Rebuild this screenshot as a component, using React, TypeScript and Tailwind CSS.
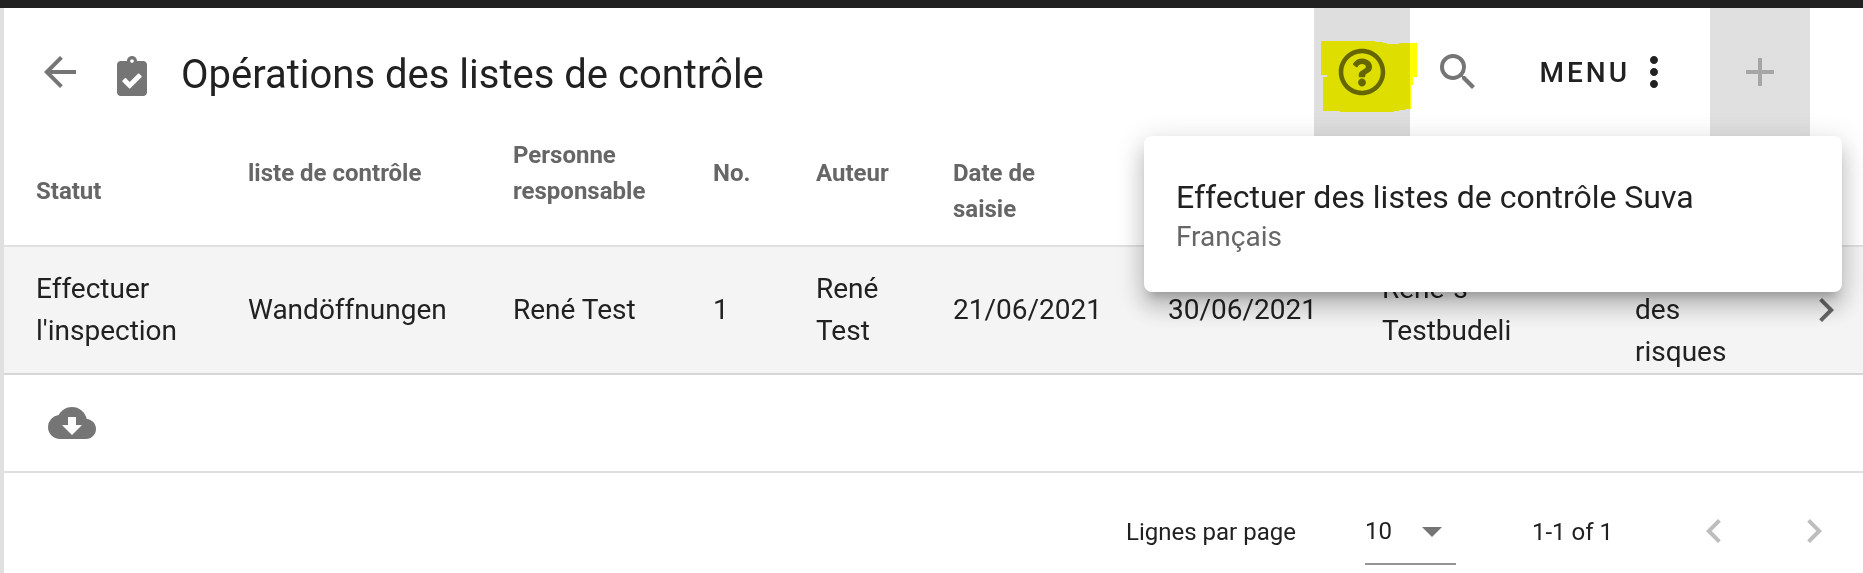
import { useState } from "react";
import { FaClipboardCheck, FaRegQuestionCircle } from "react-icons/fa";
import {
  MdAdd,
  MdArrowBack,
  MdArrowDropDown,
  MdChevronLeft,
  MdChevronRight,
  MdCloudDownload,
  MdMoreVert,
  MdSearch,
} from "react-icons/md";

interface Column {
  label: string;
  width: string;
  sortable?: boolean;
}

const columns: Column[] = [
  { label: "Statut", width: "w-[212px]" },
  { label: "liste de contrôle", width: "w-[265px]", sortable: true },
  { label: "Personne responsable", width: "w-[200px]", sortable: true },
  { label: "No.", width: "w-[103px]", sortable: true },
  { label: "Auteur", width: "w-[137px]", sortable: true },
  { label: "Date de saisie", width: "w-[215px]" },
  { label: "", width: "w-[214px]" },
  { label: "", width: "w-[253px]" },
  { label: "", width: "w-[160px]" },
];

const rows = [
  [
    "Effectuer l'inspection",
    "Wandöffnungen",
    "René Test",
    "1",
    "René Test",
    "21/06/2021",
    "30/06/2021",
    "René´s Testbudeli",
    "Analyse des risques",
  ],
];

function Marker() {
  return (
    <svg
      className="pointer-events-none absolute top-[33px] left-[7px] z-10 h-[71px] w-24 mix-blend-multiply"
      viewBox="0 0 96 71"
      aria-hidden="true"
    >
      <path
        fill="#ffff00"
        d="M0 0H54V1H62V2H66V3H78V2H96V36H92V44H90V68H84V69H78V70H73V71H19V70H2V36H6V34H0Z"
      />
    </svg>
  );
}

function HelpMenu() {
  return (
    <div className="absolute top-32 right-[21px] z-20 w-[698px] rounded-lg bg-white px-8 pt-[41px] pb-[35px] shadow-[0_10px_10px_-6px_rgba(0,0,0,0.2),0_16px_20px_2px_rgba(0,0,0,0.14),0_6px_28px_4px_rgba(0,0,0,0.12)]">
      <a href="#fr" className="block">
        <span className="block text-[32px] leading-10">Effectuer des listes de contrôle Suva</span>
        <span className="block text-[28px] leading-10 text-[#666666]">Français</span>
      </a>
    </div>
  );
}

function Toolbar() {
  const [helpOpen, setHelpOpen] = useState(true);

  return (
    <header className="relative flex h-32 items-stretch">
      <div className="flex flex-1 items-center pl-8">
        <button aria-label="Retour" className="text-[#757575]">
          <MdArrowBack className="size-12" />
        </button>
        <FaClipboardCheck className="mt-2 ml-[33px] h-10 w-[30px] text-[#757575]" />
        <h1 className="mt-1.5 ml-[34px] text-[40px] leading-[48px]">Opérations des listes de contrôle</h1>
      </div>
      <div className="flex items-stretch pr-[53px]">
        <button
          aria-label="Aide"
          aria-expanded={helpOpen}
          onClick={() => setHelpOpen(!helpOpen)}
          className="relative flex w-24 items-center justify-center bg-[#dedede] text-[#666666]"
        >
          <FaRegQuestionCircle className="size-12" />
          <Marker />
        </button>
        <button aria-label="Rechercher" className="flex w-24 items-center justify-center text-[#757575]">
          <MdSearch className="size-12" />
        </button>
        <button className="flex items-center pr-8 pl-[34px] text-[28px] font-medium tracking-[3px]">
          <span className="pt-0.5">MENU</span>
          <MdMoreVert className="size-12" />
        </button>
        <button
          aria-label="Ajouter"
          disabled
          className="flex w-[100px] items-center justify-center bg-[#e0e0e0] text-[#a6a6a6]"
        >
          <MdAdd className="size-12" />
        </button>
      </div>
      {helpOpen && <HelpMenu />}
    </header>
  );
}

function OperationsTable() {
  return (
    <table className="w-full table-fixed border-separate border-spacing-0 text-left">
      <thead>
        <tr className="h-[111px] text-2xl leading-9 text-[#666666]">
          {columns.map((col, i) => (
            <th
              key={i}
              className={`border-b-2 border-[#e0e0e0] px-8 align-middle font-bold ${col.width} ${
                col.sortable ? "pb-9" : ""
              }`}
            >
              {col.label}
            </th>
          ))}
          <th className="border-b-2 border-[#e0e0e0]" />
        </tr>
      </thead>
      <tbody>
        {rows.map((row, i) => (
          <tr key={i} className="h-32 bg-[#f4f4f4] text-[28px] leading-[42px]">
            {row.map((cell, j) => (
              <td key={j} className="border-b-2 border-[#d6d6d6] px-8 align-middle">
                {cell}
              </td>
            ))}
            <td className="border-b-2 border-[#d6d6d6] pr-[13px] align-middle">
              <MdChevronRight className="ml-auto size-12 text-[#666666]" />
            </td>
          </tr>
        ))}
      </tbody>
    </table>
  );
}

function Pagination() {
  return (
    <footer className="flex items-start justify-end pt-6 pr-[25px] text-2xl">
      <label htmlFor="page-size" className="mt-[17px] mr-[69px] leading-9">
        Lignes par page
      </label>
      <div className="relative mr-[76px] w-[91px] border-b-2 border-[#949494]">
        <select id="page-size" defaultValue="10" className="h-[66px] w-full appearance-none bg-transparent pt-0.5">
          <option>10</option>
          <option>25</option>
          <option>50</option>
        </select>
        <MdArrowDropDown className="pointer-events-none absolute top-2.5 right-0 size-12 text-[#757575]" />
      </div>
      <span className="mt-[17px] leading-9">1-1 of 1</span>
      <div className="mt-2.5 ml-[77px] flex gap-13 text-[#bdbdbd]">
        <button aria-label="Page précédente" disabled>
          <MdChevronLeft className="size-12" />
        </button>
        <button aria-label="Page suivante" disabled>
          <MdChevronRight className="size-12" />
        </button>
      </div>
    </footer>
  );
}

export default function App() {
  return (
    <div className="min-h-screen overflow-hidden border-t-8 border-[#212121] bg-white font-[Roboto,sans-serif] text-[#212121]">
      <div className="min-h-[calc(100vh-8px)] border-l-4 border-[#e0e0e0]">
        <Toolbar />
        <OperationsTable />
        <div className="border-b-2 border-[#e0e0e0] py-6 pl-11">
          <button aria-label="Télécharger" className="block text-[#757575]">
            <MdCloudDownload className="size-12" />
          </button>
        </div>
        <Pagination />
      </div>
    </div>
  );
}
